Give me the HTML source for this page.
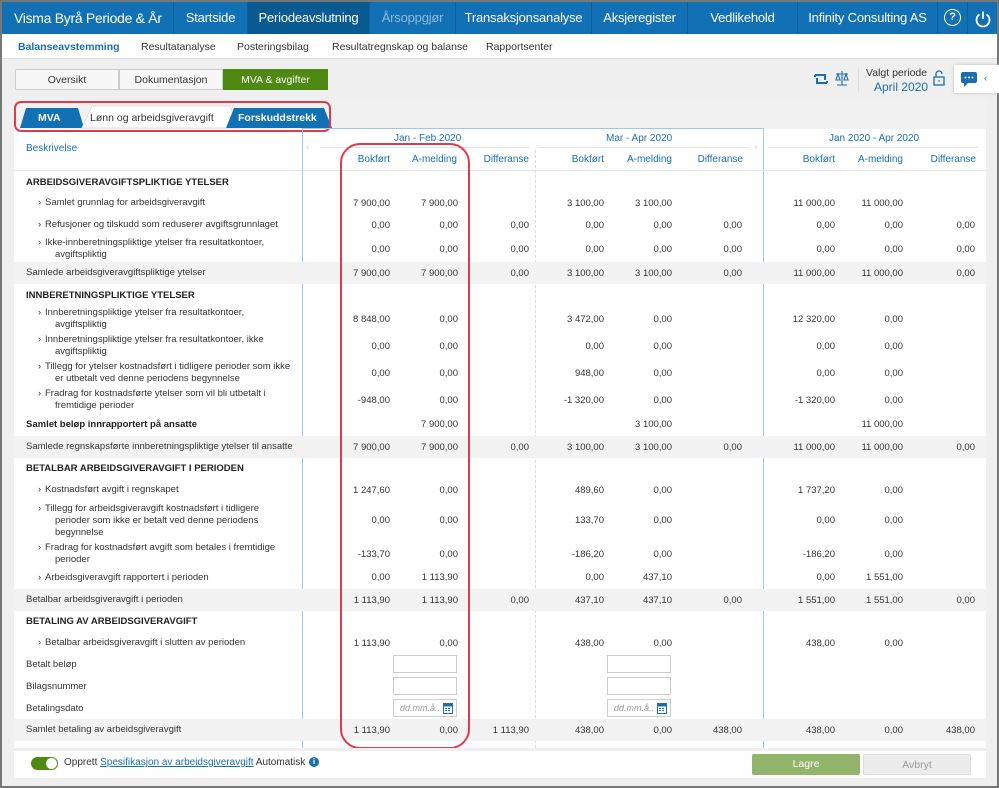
<!DOCTYPE html>
<html><head><meta charset="utf-8">
<style>
*{margin:0;padding:0;box-sizing:border-box}
body{width:999px;height:788px;overflow:hidden;background:#fff;font-family:"Liberation Sans",sans-serif;position:relative;color:#333}
.frame{position:absolute;left:0;top:0;width:999px;height:788px;border:2px solid #777;border-top:2px solid #777;background:#efefef}
.nav{position:absolute;left:2px;top:2px;width:995px;height:32px;background:#1270b5;color:#fff;font-size:13px;letter-spacing:-0.2px}
.nav div{position:absolute;top:0;height:32px;line-height:32px;text-align:center;border-right:1px solid #0d5f9c;white-space:nowrap}
.sub{position:absolute;left:2px;top:34px;width:995px;height:25px;background:#fff;border-bottom:1px solid #ddd;font-size:10.5px}
.sub span{position:absolute;top:7px}
.btn{position:absolute;top:69px;height:21px;line-height:21px;font-size:10.5px;text-align:center;border:1px solid #ccc;background:#f7f7f7;color:#333}
.panel{position:absolute;left:14px;top:100px;width:972px;height:678px;background:#fff}
.tabbar{position:absolute;left:14px;top:100px;width:972px;height:29px;background:#f1f1f1}
.r{position:absolute;left:14px;width:972px;font-size:9.5px;color:#333}
.r.g{background:#f2f2f2}
.d{position:absolute;left:12px;line-height:12px}
.d.i{left:31px}
.d.i:before{content:"›";position:absolute;left:-7px}
.d.i .c{padding-left:10px}
.b{font-weight:bold;color:#222}
.n{position:absolute;width:60px;text-align:right}
.h{position:absolute;font-size:10px;color:#1a6fb0;text-align:right;width:64px;top:154px}
.in{position:absolute;width:64px;height:18px;border:1px solid #ccc;background:#fff;font-size:9px;color:#999;font-style:italic;padding:3px 0 0 6px}
</style></head><body>
<div class="frame"></div>
<div class="nav">
<div style="left:0;width:172px;text-align:left;padding-left:12px;font-size:14px;letter-spacing:-0.3px">Visma Byrå Periode &amp; År</div>
<div style="left:172px;width:74px">Startside</div>
<div style="left:246px;width:122px;background:#0a5a92">Periodeavslutning</div>
<div style="left:368px;width:86px;color:#8fb9dc">Årsoppgjør</div>
<div style="left:454px;width:136px">Transaksjonsanalyse</div>
<div style="left:590px;width:96px">Aksjeregister</div>
<div style="left:686px;width:110px">Vedlikehold</div>
<div style="left:796px;width:140px">Infinity Consulting AS</div>
<div style="left:936px;width:30px;font-size:16px"><span style="display:inline-block;width:17px;height:17px;border:1.6px solid #fff;border-radius:50%;line-height:14px;font-size:11px;font-weight:bold;vertical-align:middle">?</span></div>
<div style="left:966px;width:29px;border:none"><svg width="18" height="18" viewBox="0 0 18 18" style="vertical-align:middle"><path d="M5.5 4.5A6.5 6.5 0 1 0 12.5 4.5" fill="none" stroke="#fff" stroke-width="1.8"/><path d="M9 1.5V9" stroke="#fff" stroke-width="1.8"/></svg></div>
</div>
<div class="sub">
<span style="left:16px;color:#1a6fb0;font-weight:bold">Balanseavstemming</span>
<span style="left:139px">Resultatanalyse</span>
<span style="left:235px">Posteringsbilag</span>
<span style="left:330px">Resultatregnskap og balanse</span>
<span style="left:484px">Rapportsenter</span>
</div>
<div class="btn" style="left:15px;width:104px;border-radius:2px 0 0 2px">Oversikt</div>
<div class="btn" style="left:119px;width:104px">Dokumentasjon</div>
<div class="btn" style="left:223px;width:105px;background:#4e8a12;color:#fff;border-color:#4e8a12">MVA &amp; avgifter</div>
<svg style="position:absolute;left:814px;top:72px" width="14" height="14"><path d="M1 3h10v5M1 3v2M13 11H3V6M13 11V9" fill="none" stroke="#1a6fb0" stroke-width="2"/></svg>
<svg style="position:absolute;left:834px;top:70px" width="16" height="16"><path d="M8 1v14M3 15h10M2 4h12M4 4l-2 6h4zM12 4l-2 6h4z" fill="none" stroke="#1a6fb0" stroke-width="1.1"/></svg>
<div style="position:absolute;left:858px;top:68px;height:24px;border-left:1px solid #ddd"></div>
<div style="position:absolute;left:866px;top:67px;font-size:10.5px;color:#333">Valgt periode</div>
<div style="position:absolute;left:874px;top:80px;font-size:12px;color:#1a6fb0">April 2020</div>
<svg style="position:absolute;left:933px;top:70px" width="12" height="16"><path d="M3 7V4a3 3 0 0 1 6 0" fill="none" stroke="#1a6fb0" stroke-width="1.3"/><rect x="1" y="7" width="10" height="8" fill="none" stroke="#1a6fb0" stroke-width="1.3"/><rect x="5.5" y="10" width="1" height="2" fill="#1a6fb0"/></svg>
<div style="position:absolute;left:954px;top:65px;width:45px;height:28px;background:#fff;box-shadow:0 0 3px #bbb"></div>
<svg style="position:absolute;left:960px;top:71px" width="18" height="17"><path d="M3 1h12a2 2 0 0 1 2 2v7a2 2 0 0 1-2 2H8l-4 4v-4H3a2 2 0 0 1-2-2V3a2 2 0 0 1 2-2z" fill="#1a6fb0"/><circle cx="5.5" cy="6.5" r="1" fill="#fff"/><circle cx="9" cy="6.5" r="1" fill="#fff"/><circle cx="12.5" cy="6.5" r="1" fill="#fff"/></svg>
<div style="position:absolute;left:984px;top:73px;font-size:9px;color:#1a6fb0">‹</div>

<div class="panel"></div>
<div class="tabbar"></div>
<svg style="position:absolute;left:14px;top:100px" width="320" height="32">
<path d="M6 28L12 8h52l6 20z" fill="#1270b5"/>
<path d="M68 28L78 6h138l8 22z" fill="#fff" stroke="#ddd"/>
<path d="M212 28L220 8h90l8 20z" fill="#1270b5"/>
</svg>
<div style="position:absolute;left:38px;top:112px;font-size:10.5px;color:#fff;font-weight:bold">MVA</div>
<div style="position:absolute;left:90px;top:112px;font-size:10.5px;color:#333">Lønn og arbeidsgiveravgift</div>
<div style="position:absolute;left:238px;top:112px;font-size:10.5px;color:#fff;font-weight:bold">Forskuddstrekk</div>
<div style="position:absolute;left:14px;top:101px;width:317px;height:31px;border:2.5px solid #e03a4e;border-radius:7px"></div>

<div style="position:absolute;left:302px;top:128px;width:462px;height:620px;border-left:1px solid #9cc8ec;border-right:1px solid #9cc8ec;border-top:1px solid #9cc8ec"></div>
<div style="position:absolute;left:535px;top:150px;height:598px;border-left:1px dashed #ddd"></div>
<div style="position:absolute;left:320px;top:147px;width:210px;border-top:1px solid #e5e5e5"></div>
<div style="position:absolute;left:538px;top:147px;width:210px;border-top:1px solid #e5e5e5"></div>
<div style="position:absolute;left:768px;top:147px;width:210px;border-top:1px solid #e5e5e5"></div>
<div style="position:absolute;left:306px;top:142px;font-size:10px;color:#ccc">‹</div>
<div style="position:absolute;left:754px;top:142px;font-size:10px;color:#ccc">›</div>
<div style="position:absolute;left:26px;top:143px;font-size:10px;color:#1a6fb0">Beskrivelse</div>
<div style="position:absolute;left:394px;top:133px;font-size:10px;color:#1a6fb0">Jan - Feb 2020</div>
<div style="position:absolute;left:606px;top:133px;font-size:10px;color:#1a6fb0">Mar - Apr 2020</div>
<div style="position:absolute;left:829px;top:133px;font-size:10px;color:#1a6fb0">Jan 2020 - Apr 2020</div>
<div class="h" style="left:326px">Bokført</div><div class="h" style="left:393px">A-melding</div><div class="h" style="left:465px">Differanse</div>
<div class="h" style="left:540px">Bokført</div><div class="h" style="left:608px">A-melding</div><div class="h" style="left:679px">Differanse</div>
<div class="h" style="left:771px">Bokført</div><div class="h" style="left:839px">A-melding</div><div class="h" style="left:912px">Differanse</div>

<div style="position:absolute;left:14px;top:170px;width:972px;border-top:1px solid #e5e5e5"></div>

<div class="r" style="top:172px;height:20px"><div class="d b" style="top:5px">ARBEIDSGIVERAVGIFTSPLIKTIGE YTELSER</div></div>
<div class="r" style="top:192px;height:22px"><div class="d i" style="top:5px">Samlet grunnlag for arbeidsgiveravgift</div>
<div class="n" style="left:316px;top:6px">7 900,00</div><div class="n" style="left:384px;top:6px">7 900,00</div>
<div class="n" style="left:530px;top:6px">3 100,00</div><div class="n" style="left:598px;top:6px">3 100,00</div>
<div class="n" style="left:761px;top:6px">11 000,00</div><div class="n" style="left:829px;top:6px">11 000,00</div></div>
<div class="r" style="top:214px;height:22px"><div class="d i" style="top:5px">Refusjoner og tilskudd som reduserer avgiftsgrunnlaget</div>
<div class="n" style="left:316px;top:6px">0,00</div><div class="n" style="left:384px;top:6px">0,00</div><div class="n" style="left:455px;top:6px">0,00</div>
<div class="n" style="left:530px;top:6px">0,00</div><div class="n" style="left:598px;top:6px">0,00</div><div class="n" style="left:668px;top:6px">0,00</div>
<div class="n" style="left:761px;top:6px">0,00</div><div class="n" style="left:829px;top:6px">0,00</div><div class="n" style="left:901px;top:6px">0,00</div></div>
<div class="r" style="top:236px;height:26px"><div class="d i" style="top:1px">Ikke-innberetningspliktige ytelser fra resultatkontoer,<br><span class="c">avgiftspliktig</span></div>
<div class="n" style="left:316px;top:8px">0,00</div><div class="n" style="left:384px;top:8px">0,00</div><div class="n" style="left:455px;top:8px">0,00</div>
<div class="n" style="left:530px;top:8px">0,00</div><div class="n" style="left:598px;top:8px">0,00</div><div class="n" style="left:668px;top:8px">0,00</div>
<div class="n" style="left:761px;top:8px">0,00</div><div class="n" style="left:829px;top:8px">0,00</div><div class="n" style="left:901px;top:8px">0,00</div></div>
<div class="r g" style="top:262px;height:22px"><div class="d" style="top:5px">Samlede arbeidsgiveravgiftspliktige ytelser</div>
<div class="n" style="left:316px;top:6px">7 900,00</div><div class="n" style="left:384px;top:6px">7 900,00</div><div class="n" style="left:455px;top:6px">0,00</div>
<div class="n" style="left:530px;top:6px">3 100,00</div><div class="n" style="left:598px;top:6px">3 100,00</div><div class="n" style="left:668px;top:6px">0,00</div>
<div class="n" style="left:761px;top:6px">11 000,00</div><div class="n" style="left:829px;top:6px">11 000,00</div><div class="n" style="left:901px;top:6px">0,00</div></div>
<div class="r" style="top:284px;height:22px"><div class="d b" style="top:6px">INNBERETNINGSPLIKTIGE YTELSER</div></div>
<div class="r" style="top:306px;height:26px"><div class="d i" style="top:1px">Innberetningspliktige ytelser fra resultatkontoer,<br><span class="c">avgiftspliktig</span></div>
<div class="n" style="left:316px;top:8px">8 848,00</div><div class="n" style="left:384px;top:8px">0,00</div>
<div class="n" style="left:530px;top:8px">3 472,00</div><div class="n" style="left:598px;top:8px">0,00</div>
<div class="n" style="left:761px;top:8px">12 320,00</div><div class="n" style="left:829px;top:8px">0,00</div></div>
<div class="r" style="top:333px;height:27px"><div class="d i" style="top:1px">Innberetningspliktige ytelser fra resultatkontoer, ikke<br><span class="c">avgiftspliktig</span></div>
<div class="n" style="left:316px;top:8px">0,00</div><div class="n" style="left:384px;top:8px">0,00</div>
<div class="n" style="left:530px;top:8px">0,00</div><div class="n" style="left:598px;top:8px">0,00</div>
<div class="n" style="left:761px;top:8px">0,00</div><div class="n" style="left:829px;top:8px">0,00</div></div>
<div class="r" style="top:360px;height:26px"><div class="d i" style="top:1px">Tillegg for ytelser kostnadsført i tidligere perioder som ikke<br><span class="c">er utbetalt ved denne periodens begynnelse</span></div>
<div class="n" style="left:316px;top:8px">0,00</div><div class="n" style="left:384px;top:8px">0,00</div>
<div class="n" style="left:530px;top:8px">948,00</div><div class="n" style="left:598px;top:8px">0,00</div>
<div class="n" style="left:761px;top:8px">0,00</div><div class="n" style="left:829px;top:8px">0,00</div></div>
<div class="r" style="top:387px;height:27px"><div class="d i" style="top:1px">Fradrag for kostnadsførte ytelser som vil bli utbetalt i<br><span class="c">fremtidige perioder</span></div>
<div class="n" style="left:316px;top:8px">-948,00</div><div class="n" style="left:384px;top:8px">0,00</div>
<div class="n" style="left:530px;top:8px">-1 320,00</div><div class="n" style="left:598px;top:8px">0,00</div>
<div class="n" style="left:761px;top:8px">-1 320,00</div><div class="n" style="left:829px;top:8px">0,00</div></div>
<div class="r" style="top:414px;height:22px"><div class="d b" style="top:5px">Samlet beløp innrapportert på ansatte</div>
<div class="n" style="left:384px;top:5px">7 900,00</div><div class="n" style="left:598px;top:5px">3 100,00</div><div class="n" style="left:829px;top:5px">11 000,00</div></div>
<div class="r g" style="top:436px;height:22px"><div class="d" style="top:5px">Samlede regnskapsførte innberetningspliktige ytelser til ansatte</div>
<div class="n" style="left:316px;top:6px">7 900,00</div><div class="n" style="left:384px;top:6px">7 900,00</div><div class="n" style="left:455px;top:6px">0,00</div>
<div class="n" style="left:530px;top:6px">3 100,00</div><div class="n" style="left:598px;top:6px">3 100,00</div><div class="n" style="left:668px;top:6px">0,00</div>
<div class="n" style="left:761px;top:6px">11 000,00</div><div class="n" style="left:829px;top:6px">11 000,00</div><div class="n" style="left:901px;top:6px">0,00</div></div>
<div class="r" style="top:458px;height:21px"><div class="d b" style="top:5px">BETALBAR ARBEIDSGIVERAVGIFT I PERIODEN</div></div>
<div class="r" style="top:479px;height:22px"><div class="d i" style="top:5px">Kostnadsført avgift i regnskapet</div>
<div class="n" style="left:316px;top:6px">1 247,60</div><div class="n" style="left:384px;top:6px">0,00</div>
<div class="n" style="left:530px;top:6px">489,60</div><div class="n" style="left:598px;top:6px">0,00</div>
<div class="n" style="left:761px;top:6px">1 737,20</div><div class="n" style="left:829px;top:6px">0,00</div></div>
<div class="r" style="top:502px;height:38px"><div class="d i" style="top:1px">Tillegg for arbeidsgiveravgift kostnadsført i tidligere<br><span class="c">perioder som ikke er betalt ved denne periodens</span><br><span class="c">begynnelse</span></div>
<div class="n" style="left:316px;top:13px">0,00</div><div class="n" style="left:384px;top:13px">0,00</div>
<div class="n" style="left:530px;top:13px">133,70</div><div class="n" style="left:598px;top:13px">0,00</div>
<div class="n" style="left:761px;top:13px">0,00</div><div class="n" style="left:829px;top:13px">0,00</div></div>
<div class="r" style="top:540px;height:27px"><div class="d i" style="top:2px">Fradrag for kostnadsført avgift som betales i fremtidige<br><span class="c">perioder</span></div>
<div class="n" style="left:316px;top:9px">-133,70</div><div class="n" style="left:384px;top:9px">0,00</div>
<div class="n" style="left:530px;top:9px">-186,20</div><div class="n" style="left:598px;top:9px">0,00</div>
<div class="n" style="left:761px;top:9px">-186,20</div><div class="n" style="left:829px;top:9px">0,00</div></div>
<div class="r" style="top:567px;height:22px"><div class="d i" style="top:5px">Arbeidsgiveravgift rapportert i perioden</div>
<div class="n" style="left:316px;top:5px">0,00</div><div class="n" style="left:384px;top:5px">1 113,90</div>
<div class="n" style="left:530px;top:5px">0,00</div><div class="n" style="left:598px;top:5px">437,10</div>
<div class="n" style="left:761px;top:5px">0,00</div><div class="n" style="left:829px;top:5px">1 551,00</div></div>
<div class="r g" style="top:589px;height:22px"><div class="d" style="top:5px">Betalbar arbeidsgiveravgift i perioden</div>
<div class="n" style="left:316px;top:6px">1 113,90</div><div class="n" style="left:384px;top:6px">1 113,90</div><div class="n" style="left:455px;top:6px">0,00</div>
<div class="n" style="left:530px;top:6px">437,10</div><div class="n" style="left:598px;top:6px">437,10</div><div class="n" style="left:668px;top:6px">0,00</div>
<div class="n" style="left:761px;top:6px">1 551,00</div><div class="n" style="left:829px;top:6px">1 551,00</div><div class="n" style="left:901px;top:6px">0,00</div></div>
<div class="r" style="top:611px;height:21px"><div class="d b" style="top:5px">BETALING AV ARBEIDSGIVERAVGIFT</div></div>
<div class="r" style="top:632px;height:22px"><div class="d i" style="top:5px">Betalbar arbeidsgiveravgift i slutten av perioden</div>
<div class="n" style="left:316px;top:6px">1 113,90</div><div class="n" style="left:384px;top:6px">0,00</div>
<div class="n" style="left:530px;top:6px">438,00</div><div class="n" style="left:598px;top:6px">0,00</div>
<div class="n" style="left:761px;top:6px">438,00</div><div class="n" style="left:829px;top:6px">0,00</div></div>
<div class="r" style="top:654px;height:21px"><div class="d" style="top:5px">Betalt beløp</div></div>
<div class="r" style="top:675px;height:22px"><div class="d" style="top:6px">Bilagsnummer</div></div>
<div class="r" style="top:697px;height:22px"><div class="d" style="top:6px">Betalingsdato</div></div>
<div class="in" style="left:393px;top:655px"></div><div class="in" style="left:607px;top:655px"></div>
<div class="in" style="left:393px;top:677px"></div><div class="in" style="left:607px;top:677px"></div>
<div class="in" style="left:393px;top:699px">dd.mm.å..</div><div class="in" style="left:607px;top:699px">dd.mm.å..</div>
<svg style="position:absolute;left:443px;top:702px" width="10" height="12"><rect x="0.5" y="1.5" width="9" height="10" fill="#fff" stroke="#1a6fb0"/><rect x="0.5" y="1.5" width="9" height="3" fill="#1a6fb0"/><path d="M2 6h2v1H2zM5 6h2v1H5zM2 8h2v1H2zM5 8h2v1H5z" fill="#1a6fb0"/></svg>
<svg style="position:absolute;left:657px;top:702px" width="10" height="12"><rect x="0.5" y="1.5" width="9" height="10" fill="#fff" stroke="#1a6fb0"/><rect x="0.5" y="1.5" width="9" height="3" fill="#1a6fb0"/><path d="M2 6h2v1H2zM5 6h2v1H5zM2 8h2v1H2zM5 8h2v1H5z" fill="#1a6fb0"/></svg>
<div class="r g" style="top:719px;height:22px"><div class="d" style="top:5px">Samlet betaling av arbeidsgiveravgift</div>
<div class="n" style="left:316px;top:6px">1 113,90</div><div class="n" style="left:384px;top:6px">0,00</div><div class="n" style="left:455px;top:6px">1 113,90</div>
<div class="n" style="left:530px;top:6px">438,00</div><div class="n" style="left:598px;top:6px">0,00</div><div class="n" style="left:668px;top:6px">438,00</div>
<div class="n" style="left:761px;top:6px">438,00</div><div class="n" style="left:829px;top:6px">0,00</div><div class="n" style="left:901px;top:6px">438,00</div></div>

<div style="position:absolute;left:340px;top:143px;width:130px;height:606px;border:2.5px solid #e03a4e;border-radius:20px"></div>

<div style="position:absolute;left:14px;top:748px;width:972px;height:30px;background:#fff;border-top:3px solid #efefef"></div>
<div style="position:absolute;left:31px;top:757px;width:27px;height:13px;border-radius:7px;background:#4e8a12"></div>
<div style="position:absolute;left:46px;top:758px;width:11px;height:11px;border-radius:50%;background:#fff"></div>
<div style="position:absolute;left:64px;top:757px;font-size:10px;color:#333">Opprett <span style="color:#1a6fb0;text-decoration:underline">Spesifikasjon av arbeidsgiveravgift</span> Automatisk</div>
<div style="position:absolute;left:309px;top:757px;width:10px;height:10px;border-radius:50%;background:#1a6fb0;color:#fff;font-size:8px;text-align:center;line-height:10px;font-weight:bold">i</div>
<div style="position:absolute;left:752px;top:754px;width:108px;height:21px;background:#93b56b;color:#fff;font-size:10.5px;text-align:center;line-height:21px;border-radius:2px">Lagre</div>
<div style="position:absolute;left:863px;top:754px;width:108px;height:21px;background:#ececec;color:#999;font-size:10.5px;text-align:center;line-height:21px;border:1px solid #ddd;border-radius:2px">Avbryt</div>
</body></html>
